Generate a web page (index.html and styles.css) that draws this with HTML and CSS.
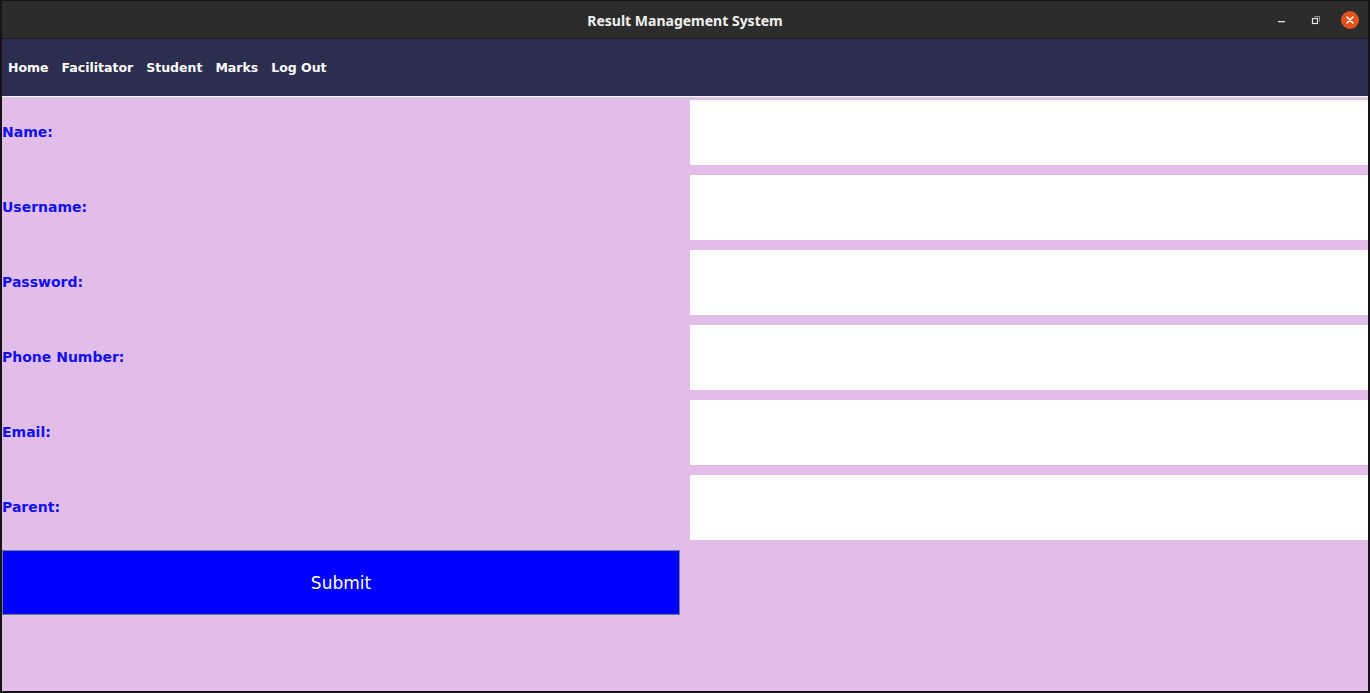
FILE: index.html
```html
<!DOCTYPE html>
<html>
<head>
<meta charset="utf-8">
<title>Result Management System</title>
<link rel="stylesheet" href="styles.css">
</head>
<body>
<div class="window">
  <header class="titlebar">
    <div class="spacer"></div>
    <div class="title">Result Management System</div>
    <div class="controls">
      <span class="ctl">
        <svg width="12" height="12" viewBox="0 0 12 12"><rect x="2" y="7" width="7" height="1.3" fill="#e6e6e6"/></svg>
      </span>
      <span class="ctl">
        <svg width="12" height="12" viewBox="0 0 12 12"><rect x="2.5" y="4.5" width="5" height="5" fill="none" stroke="#e6e6e6" stroke-width="1.2"/><path d="M4.5 2.5 H9.5 V7.5" fill="none" stroke="#9a9a9a" stroke-width="1"/></svg>
      </span>
      <span class="ctl">
        <svg width="18" height="18" viewBox="0 0 18 18"><circle cx="9" cy="9" r="9" fill="#e2521d"/><path d="M6 6 L12 12 M12 6 L6 12" stroke="#fff" stroke-width="1.5" stroke-linecap="round"/></svg>
      </span>
    </div>
  </header>
  <nav class="navbar">
    <span class="nav-item">Home</span>
    <span class="nav-item">Facilitator</span>
    <span class="nav-item">Student</span>
    <span class="nav-item">Marks</span>
    <span class="nav-item">Log Out</span>
  </nav>
  <div class="sep"></div>
  <main class="content">
    <form class="form">
      <label class="label">Name:</label>
      <input class="field" type="text">
      <label class="label">Username:</label>
      <input class="field" type="text">
      <label class="label">Password:</label>
      <input class="field" type="password">
      <label class="label">Phone Number:</label>
      <input class="field" type="text">
      <label class="label">Email:</label>
      <input class="field" type="text">
      <label class="label">Parent:</label>
      <input class="field" type="text">
      <button class="submit" type="button">Submit</button>
    </form>
  </main>
</div>
</body>
</html>
```

FILE: styles.css
```css
html, body {
  margin: 0;
  padding: 0;
  background: #161616;
}
.window {
  width: 1370px;
  height: 693px;
  box-sizing: border-box;
  border: 2px solid #141414;
  border-top-width: 1px;
  display: flex;
  flex-direction: column;
  overflow: hidden;
}
.titlebar {
  height: 37px;
  flex: none;
  background: #2c2c2c;
  display: grid;
  grid-template-columns: 1fr auto 1fr;
  align-items: center;
  border-bottom: 1px solid #1e1e1e;
}
.title {
  font-family: "Noto Sans", "DejaVu Sans", sans-serif;
  font-weight: 700;
  font-size: 14px;
  color: #f0f0f0;
  padding-top: 1px;
}
.controls {
  display: flex;
  justify-content: flex-end;
  align-items: center;
  padding-right: 1px;
}
.ctl {
  width: 34px;
  height: 20px;
  display: flex;
  align-items: center;
  justify-content: center;
}
.navbar {
  height: 57px;
  flex: none;
  background: #2b2e4f;
  display: flex;
  align-items: center;
  padding-left: 6px;
  gap: 13px;
  box-sizing: border-box;
}
.nav-item {
  font-family: "DejaVu Sans", sans-serif;
  font-weight: 700;
  font-size: 12.5px;
  color: #ffffff;
}
.sep {
  height: 1px;
  background: #f4f4f4;
  flex: none;
  border-bottom: 1px solid #d8ccdc;
}
.content {
  flex: 1;
  background: #e3bdea;
  padding-top: 2px;
}
.form {
  margin: 0;
  display: grid;
  grid-template-columns: 678px 678px;
  grid-auto-rows: 65px;
  column-gap: 10px;
  row-gap: 10px;
}
.label {
  font-family: "DejaVu Sans", sans-serif;
  font-weight: 700;
  font-size: 14px;
  color: #1010f0;
  display: flex;
  align-items: center;
  padding-bottom: 2px;
}
.field {
  margin: 0;
  border: none;
  background: #ffffff;
  height: 65px;
  box-sizing: border-box;
  outline: none;
}
.submit {
  grid-column: 1;
  margin: 0;
  background: #0000ff;
  border: 1px solid #6b7b8c;
  color: #ffffff;
  font-family: "DejaVu Sans", sans-serif;
  font-weight: 500;
  font-size: 17px;
  height: 65px;
  padding: 0;
}
```
